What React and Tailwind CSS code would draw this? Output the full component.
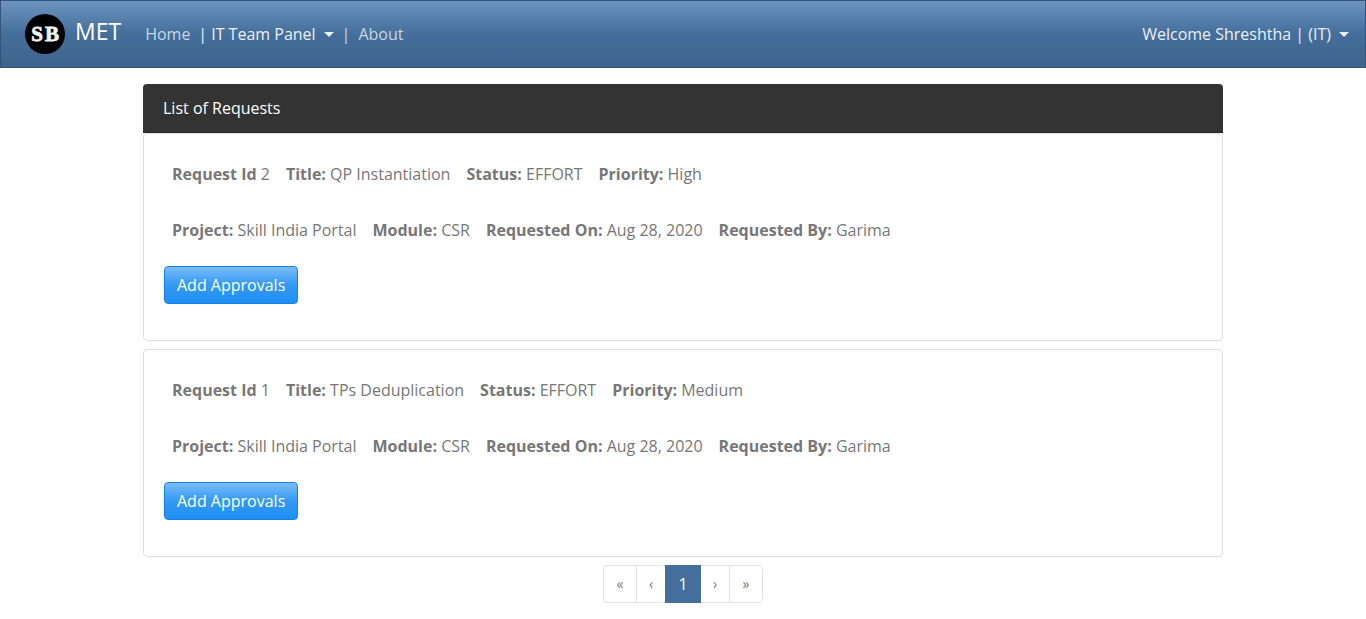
import React from "react";

const requests = [
  [
    [["Request Id", "2"], ["Title:", "QP Instantiation"], ["Status:", "EFFORT"], ["Priority:", "High"]],
    [["Project:", "Skill India Portal"], ["Module:", "CSR"], ["Requested On:", "Aug 28, 2020"], ["Requested By:", "Garima"]],
  ],
  [
    [["Request Id", "1"], ["Title:", "TPs Deduplication"], ["Status:", "EFFORT"], ["Priority:", "Medium"]],
    [["Project:", "Skill India Portal"], ["Module:", "CSR"], ["Requested On:", "Aug 28, 2020"], ["Requested By:", "Garima"]],
  ],
];

function Caret() {
  return (
    <svg className="h-[5px] w-[10px]" viewBox="0 0 10 5" fill="currentColor" aria-hidden="true">
      <path d="M0 0h10L5 5z" />
    </svg>
  );
}

function Logo() {
  return (
    <svg className="h-10 w-10" viewBox="0 0 40 40" aria-hidden="true">
      <circle cx="20" cy="20" r="20" fill="#000" />
      <g
        fill="#f4f4f4"
        stroke="#f4f4f4"
        strokeWidth="0.8"
        fontSize="21"
        fontWeight="700"
        fontFamily="'Liberation Serif', serif"
        textAnchor="middle"
      >
        <text x="12" y="27">S</text>
        <text x="27" y="27">B</text>
      </g>
    </svg>
  );
}

function Navbar() {
  return (
    <nav className="flex min-h-[68px] items-center justify-between border border-[#345578] bg-[linear-gradient(#6d94bf,#446e9b_50%,#3e648d)] pr-4 pl-6 text-[#ecf0f5]">
      <div className="flex items-center">
        <a href="#home" className="flex items-center gap-[10px] text-white">
          <Logo />
          <span className="pb-[6px] text-[23px] leading-8">MET</span>
        </a>
        <div className="ml-6 flex items-center">
          <a href="#home" className="text-[#c9d6e4]">Home</a>
          <span className="ml-2">|</span>
          <button type="button" className="ml-1 flex items-center gap-2">
            IT Team Panel <Caret />
          </button>
          <span className="ml-2 text-[#c9d6e4]">|</span>
          <a href="#about" className="ml-2 text-[#c9d6e4]">About</a>
        </div>
      </div>
      <button type="button" className="flex items-center gap-2">
        Welcome Shreshtha | (IT) <Caret />
      </button>
    </nav>
  );
}

function RequestCard({ rows }) {
  return (
    <article className="rounded border border-[#dfdfdf] px-5 pt-5 pb-9">
      {rows.map((fields, i) => (
        <div key={i} className="mb-4 flex flex-wrap gap-x-4 p-2">
          {fields.map(([label, value]) => (
            <span key={label}>
              <strong className="font-bold">{label}</strong> {value}
            </span>
          ))}
        </div>
      ))}
      <button
        type="button"
        className="block rounded border border-[#1382e9] bg-[linear-gradient(#7abbfb,#3399f3_50%,#218ff5)] px-3 py-[6px] text-white"
      >
        Add Approvals
      </button>
    </article>
  );
}

function Pagination() {
  const side = "flex items-center justify-center border-y border-[#dee2e6] text-sm hover:bg-gray-100";
  return (
    <nav aria-label="Pages" className="mt-2 flex h-[38px] justify-center">
      <button type="button" aria-label="First" className={`${side} w-[34px] rounded-l border-x`}>«</button>
      <button type="button" aria-label="Previous" className={`${side} w-7`}>‹</button>
      <button type="button" aria-current="page" className="w-9 bg-[#446e9b] text-white">1</button>
      <button type="button" aria-label="Next" className={`${side} w-7`}>›</button>
      <button type="button" aria-label="Last" className={`${side} w-[34px] rounded-r border-x`}>»</button>
    </nav>
  );
}

export default function App() {
  return (
    <div className="bg-white font-['Open_Sans',sans-serif] text-base leading-6 text-[#777]">
      <Navbar />
      <main className="mx-auto mt-4 max-w-[1080px]">
        <h1 className="rounded-t border-b border-[#2b2b2b] bg-[#333] px-5 py-3 text-white">
          List of Requests
        </h1>
        <div className="flex flex-col gap-2">
          {requests.map((rows, i) => (
            <RequestCard key={i} rows={rows} />
          ))}
        </div>
        <Pagination />
      </main>
    </div>
  );
}
